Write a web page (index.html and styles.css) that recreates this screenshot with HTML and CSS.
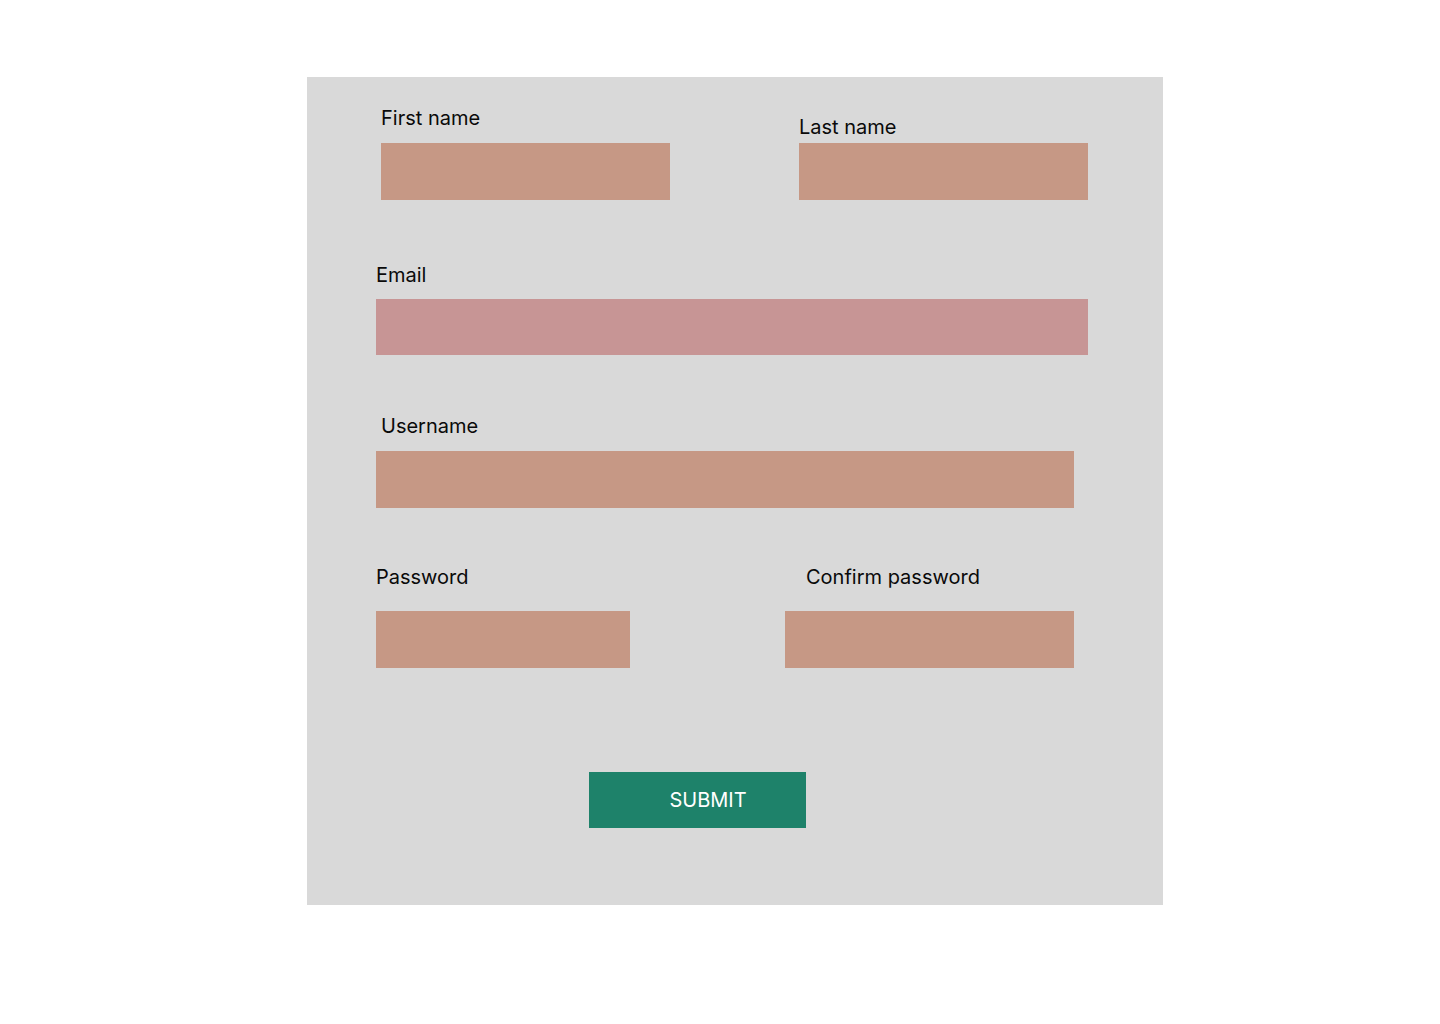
FILE: index.html
```html
<!DOCTYPE html>
<html lang="en">
<head>
<meta charset="utf-8">
<title>Sign up</title>
<link rel="stylesheet" href="styles.css">
</head>
<body>
<form class="panel">
  <div class="row row-names">
    <div class="field field-first">
      <label class="label label-first">First name</label>
      <div class="input input-half"></div>
    </div>
    <div class="field field-last">
      <label class="label label-last">Last name</label>
      <div class="input input-half"></div>
    </div>
  </div>
  <div class="field field-email">
    <label class="label label-email">Email</label>
    <div class="input input-email"></div>
  </div>
  <div class="field field-user">
    <label class="label label-user">Username</label>
    <div class="input input-user"></div>
  </div>
  <div class="row row-pass">
    <div class="field field-pass">
      <label class="label label-pass">Password</label>
      <div class="input input-pass"></div>
    </div>
    <div class="field field-confirm">
      <label class="label label-confirm">Confirm password</label>
      <div class="input input-confirm"></div>
    </div>
  </div>
  <button type="button" class="submit">SUBMIT</button>
</form>
</body>
</html>
```
FILE: styles.css
```css
* { box-sizing: border-box; }
html, body { margin: 0; padding: 0; background: #ffffff; }
body {
  width: 1440px;
  height: 1024px;
  font-family: Inter, "Noto Sans", sans-serif;
  overflow: hidden;
}
.panel {
  margin: 77px 0 0 307px;
  width: 856px;
  height: 828px;
  background: #d9d9d9;
  padding-top: 29px;
  display: flex;
  flex-direction: column;
  align-items: flex-start;
}
.row { display: flex; align-items: flex-end; }
.field { display: flex; flex-direction: column; align-items: flex-start; }
.label {
  font-size: 20px;
  line-height: 24px;
  color: #0a0a0a;
  font-weight: 400;
}
.input { height: 57px; background: #c69885; }

.row-names { margin-left: 74px; }
.label-first { margin-bottom: 13px; }
.label-last { margin-bottom: 4px; }
.field-last { margin-left: 129px; }
.input-half { width: 289px; }

.field-email { margin-left: 69px; margin-top: 63px; }
.label-email { margin-bottom: 12px; }
.input-email { width: 712px; height: 56px; background: #c79595; }

.field-user { margin-left: 69px; margin-top: 59px; }
.label-user { margin-left: 5px; margin-bottom: 13px; }
.input-user { width: 698px; }

.row-pass { margin-left: 69px; margin-top: 57px; }
.label-pass { margin-bottom: 22px; }
.input-pass { width: 254px; }
.field-confirm { margin-left: 155px; }
.label-confirm { margin-left: 21px; margin-bottom: 22px; }
.input-confirm { width: 289px; }

.submit {
  margin-top: 104px;
  margin-left: 282px;
  width: 217px;
  height: 56px;
  background: #1e826a;
  border: none;
  color: #ffffff;
  font-family: Inter, "Noto Sans", sans-serif;
  font-size: 20px;
  line-height: 24px;
  padding: 0 0 0 21px;
  display: flex;
  align-items: center;
  justify-content: center;
}
```
